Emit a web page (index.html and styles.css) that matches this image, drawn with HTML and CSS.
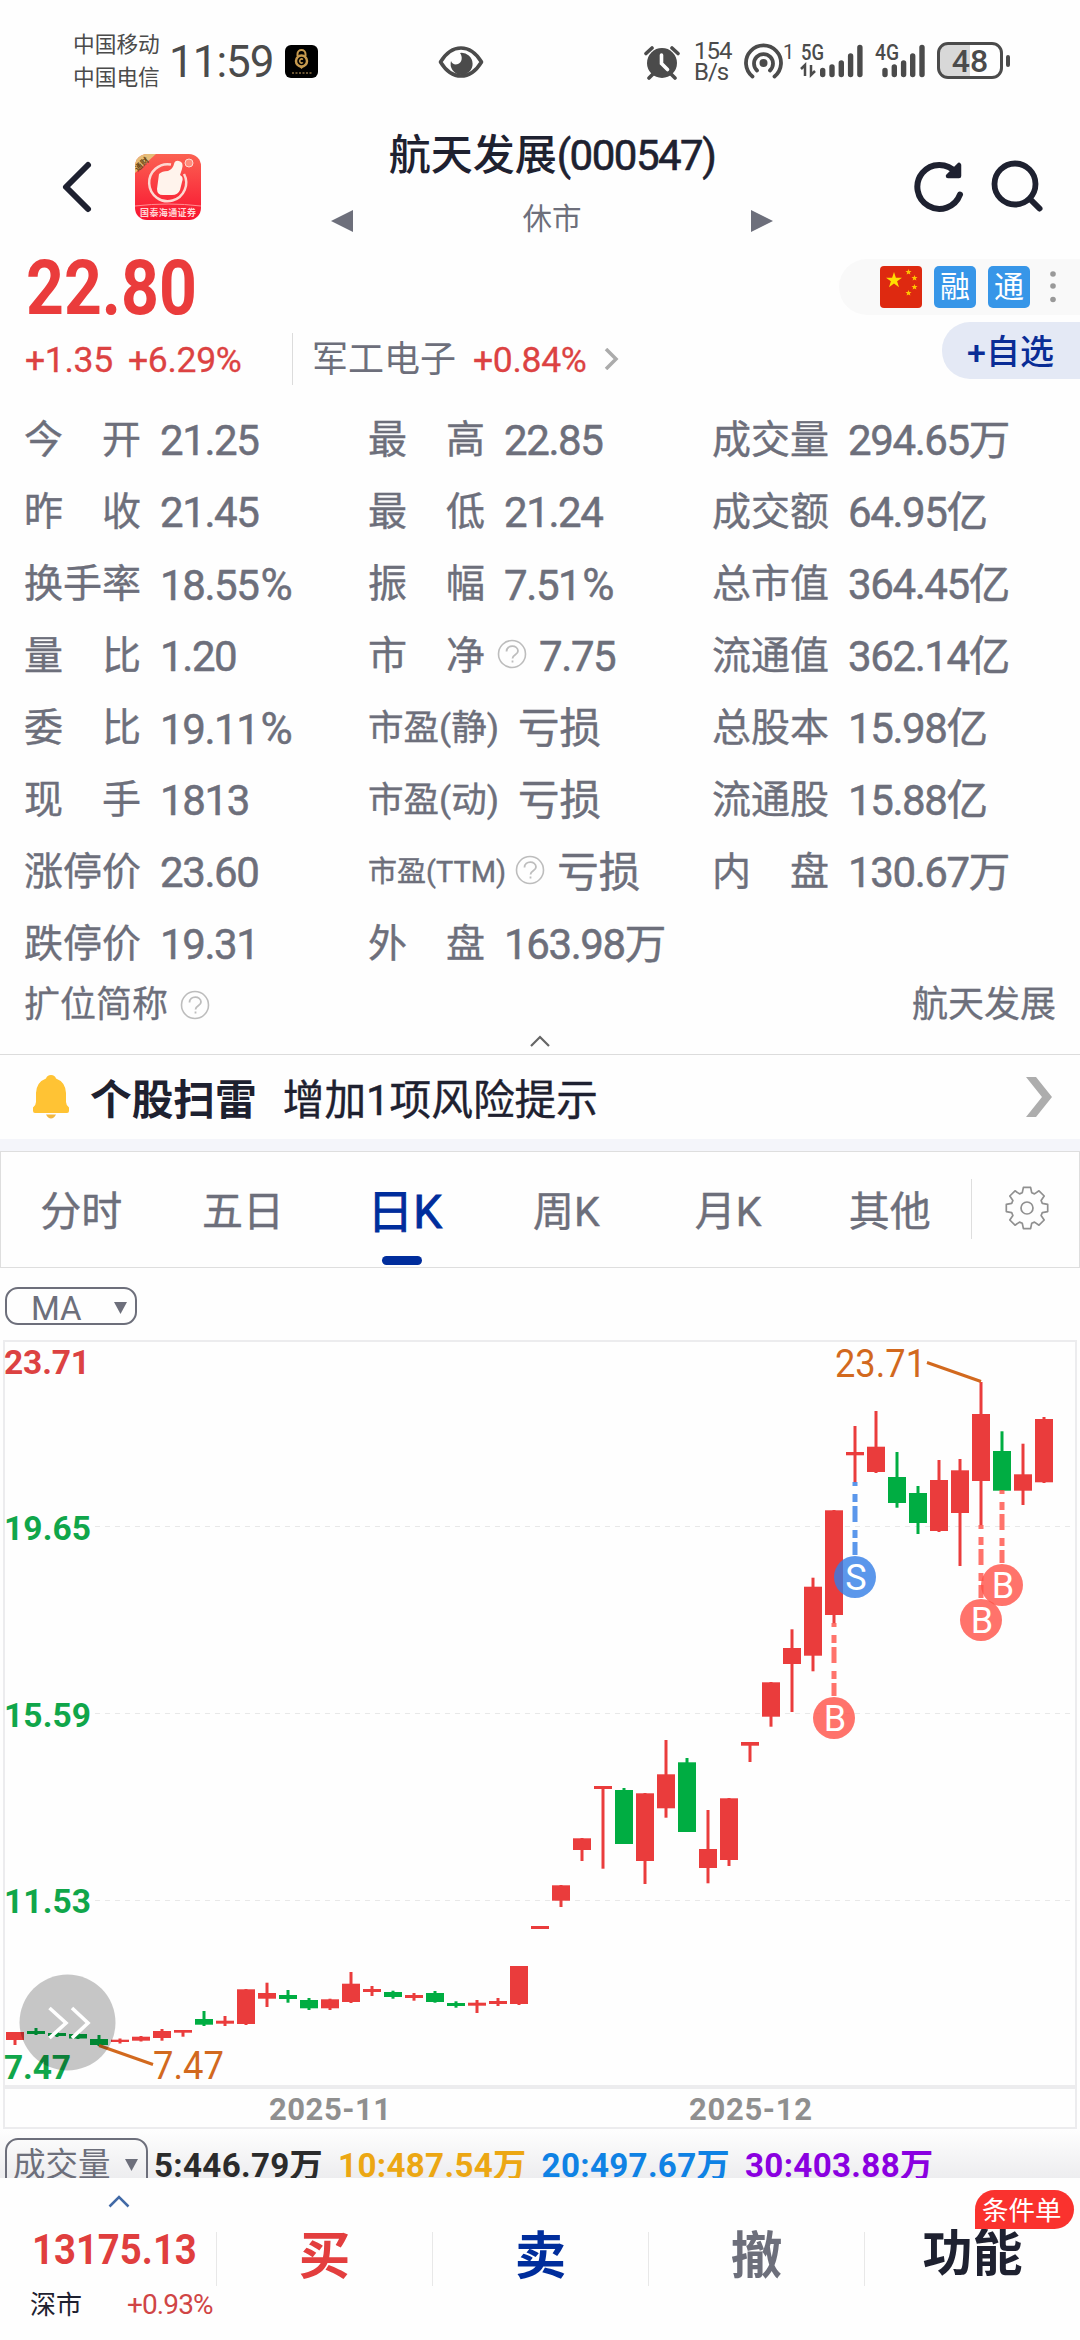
FILE: index.html
```html
<!DOCTYPE html>
<html lang="zh-CN">
<head>
    <meta charset="UTF-8">
    <title>航天发展(000547)</title>
    <link rel="stylesheet" href="styles.css">
</head>
<body>
    <div class="status-bar">
        <div class="carriers">
            <span>中国移动</span>
            <span>中国电信</span>
        </div>
        <span class="clock">11:59</span>
        <svg class="lock-app" width="33" height="33" viewBox="0 0 33 33">
            <rect width="33" height="33" rx="6" fill="#000"/>
            <path d="M12.500 11V9a4 4 0 0 1 8 0v2" fill="none" stroke="#c79a4e" stroke-width="2"/>
            <circle cx="16.500" cy="16" r="5.500" fill="none" stroke="#c79a4e" stroke-width="2.500"/>
            <path d="M18 14.500a2 2 0 1 0 0 3" fill="none" stroke="#c79a4e" stroke-width="1.500"/>
            <path d="M14.500 22h4l-2 2z" fill="#c79a4e"/>
            <path d="M7 28h20" stroke="#8d7245" stroke-width="1.500" stroke-dasharray="2 1.500"/>
        </svg>
        <svg class="eye" width="46" height="34" viewBox="0 0 46 34">
            <path d="M2.500 17C8 8 14.500 3 23 3s15 5 20.500 14C38 26 31.500 31 23 31S8 26 2.500 17z" fill="none" stroke="#4b4b4b" stroke-width="3.600" stroke-linejoin="round"/>
            <path d="M22 8a11 11 0 1 1-9 8c1 3 4 4 7 3 4-1.500 5-7 2-11z" fill="#4b4b4b"/>
        </svg>
        <svg class="alarm" width="36" height="36" viewBox="0 0 36 36">
            <circle cx="18" cy="19" r="15" fill="#4b4b4b"/>
            <path d="M2 9.500l6-5.500M34 9.500L28 4M5 34l4-4M31 34l-4-4" stroke="#4b4b4b" stroke-width="3.600" stroke-linecap="round"/>
            <path d="M17.500 11v8.500l6 6" fill="none" stroke="#fefefe" stroke-width="3.600" stroke-linecap="round"/>
        </svg>
        <div class="speed">
            <span>154</span>
            <span>B/s</span>
        </div>
        <svg class="hotspot" width="52" height="40" viewBox="0 0 52 40">
            <circle cx="20.500" cy="22" r="4" fill="#4b4b4b"/>
            <path d="M14 29.500a9.500 9.500 0 1 1 13 0M9.500 35.500a17.500 17.500 0 1 1 22 0" fill="none" stroke="#4b4b4b" stroke-width="3.800" stroke-linecap="round"/>
            <text x="40" y="18" class="tiny-num">1</text>
        </svg>
        <svg class="signal" width="64" height="38" viewBox="0 0 64 38">
            <text x="1" y="19" class="net" textLength="23" lengthAdjust="spacingAndGlyphs">5G</text>
            <path d="M1 28l4-4v11M11 24v10l4-4" fill="none" stroke="#4b4b4b" stroke-width="2.500"/>
            <path d="M22.700 29.500v4M32 26v7.500M41.300 22v11.500M50.600 15v18.500M59.900 6.500v27" stroke="#4b4b4b" stroke-width="5.400" stroke-linecap="round"/>
        </svg>
        <svg class="signal second" width="54" height="38" viewBox="0 0 54 38">
            <text x="1" y="19" class="net" textLength="24" lengthAdjust="spacingAndGlyphs">4G</text>
            <path d="M11 29.500v4M20.300 26v7.500M29.600 22v11.500M38.700 15v18.500M48 6.500v27" stroke="#4b4b4b" stroke-width="5.400" stroke-linecap="round"/>
        </svg>
        <div class="battery">48</div>
        <div class="battery-tip"></div>
    </div>

    <header class="header">
        <svg class="back" width="34" height="56" viewBox="0 0 34 56">
            <path d="M28 6L6 28l22 22" fill="none" stroke="#1e2130" stroke-width="6" stroke-linecap="round" stroke-linejoin="round"/>
        </svg>
        <svg class="broker-logo" width="66" height="66" viewBox="0 0 66 66">
            <defs>
                <linearGradient id="logoRed" x1="0" y1="0" x2="0" y2="1">
                    <stop offset="0" stop-color="#fb6152"/>
                    <stop offset="1" stop-color="#f91430"/>
                </linearGradient>
                <clipPath id="logoClip"><rect width="66" height="66" rx="12"/></clipPath>
            </defs>
            <g clip-path="url(#logoClip)">
                <rect width="66" height="66" fill="url(#logoRed)"/>
                <path d="M0 0h21L0 19z" fill="#e6bd78"/>
                <text x="-2" y="14" class="logo-tag" transform="rotate(-42 5 10)">通财</text>
                <path d="M36 10.500A18.500 18.500 0 1 0 49 20" fill="none" stroke="#fdd9d2" stroke-width="2.500"/>
                <path d="M24 20q3-3 9-3 5-2 6-7 1-4 5-3 5 1 3 8l-2 6q4 2 2 7l-2 8q-2 5-8 5H28q-6 0-6-6z" fill="#fff3ec"/>
                <circle cx="54" cy="9" r="4" fill="#ff8c7c" stroke="#fdd9d2"/>
                <path d="M0 52q33-4 66 0" fill="none" stroke="#ff8f92" stroke-width="1"/>
                <text x="5" y="62" class="logo-name" textLength="56">国泰海通证券</text>
            </g>
        </svg>
        <div class="title-block">
            <h1>航天发展<span class="code">(000547)</span></h1>
            <div class="switcher">
                <svg width="22" height="22" viewBox="0 0 22 22"><path d="M22 0v22L0 11z" fill="#6d6f7b"/></svg>
                <span>休市</span>
                <svg width="22" height="22" viewBox="0 0 22 22"><path d="M0 0v22l22-11z" fill="#6d6f7b"/></svg>
            </div>
        </div>
        <svg class="refresh" width="54" height="54" viewBox="0 0 54 54">
            <path d="M48 34.500a22 22 0 1 1-4-22" fill="none" stroke="#1e2130" stroke-width="6" stroke-linecap="round"/>
            <path d="M47 5v11H36z" fill="#1e2130" stroke="#1e2130" stroke-width="4.500" stroke-linejoin="round" stroke-linecap="round"/>
        </svg>
        <svg class="search" width="54" height="54" viewBox="0 0 54 54">
            <circle cx="24" cy="24" r="20.500" fill="none" stroke="#1e2130" stroke-width="5.800"/>
            <path d="M39 39l9.500 9.500" stroke="#1e2130" stroke-width="6" stroke-linecap="round"/>
        </svg>
    </header>

    <section class="quote">
        <div class="quote-left">
            <div class="price">22.80</div>
            <div class="changes">
                <span class="change">+1.35</span>
                <span class="change pct">+6.29%</span>
                <span class="sector">军工电子</span>
                <span class="change sector-pct">+0.84%</span>
                <svg width="15" height="22" viewBox="0 0 15 22"><path d="M2 1l10 10L2 21" fill="none" stroke="#ababab" stroke-width="3.500"/></svg>
            </div>
        </div>
        <div class="quote-right">
            <div class="tags">
                <svg width="42" height="42" viewBox="0 0 42 42">
                    <rect width="42" height="42" rx="4" fill="#de2910"/>
                    <path d="M14 6l1.900 5.700H22l-4.900 3.600 1.900 5.900-5-3.600-5 3.600 1.900-5.900L6 11.700h6.100z" fill="#ffde00"/>
                    <g fill="#ffc500">
                        <path id="star" d="M28.500 3l.8 2 2.200.1-1.700 1.400.6 2.100-1.900-1.200-1.900 1.200.6-2.100-1.700-1.400 2.200-.1z"/>
                        <use href="#star" x="6" y="6"/>
                        <use href="#star" x="6" y="15"/>
                        <use href="#star" y="21"/>
                    </g>
                </svg>
                <span class="tag">融</span>
                <span class="tag">通</span>
                <svg class="dots" width="8" height="36" viewBox="0 0 8 36">
                    <g fill="#999"><circle cx="4" cy="5" r="2.800"/><circle cx="4" cy="17" r="2.800"/><circle cx="4" cy="30.500" r="2.800"/></g>
                </svg>
            </div>
            <div class="watch">+自选</div>
        </div>
    </section>

    <section class="stats">
        <div class="stat"><label>今　开</label><b>21.25</b></div>
        <div class="stat"><label>最　高</label><b>22.85</b></div>
        <div class="stat"><label>成交量</label><b>294.65<i>万</i></b></div>

        <div class="stat"><label>昨　收</label><b>21.45</b></div>
        <div class="stat"><label>最　低</label><b>21.24</b></div>
        <div class="stat"><label>成交额</label><b>64.95<i>亿</i></b></div>

        <div class="stat"><label>换手率</label><b>18.55<u>%</u></b></div>
        <div class="stat"><label>振　幅</label><b>7.51<u>%</u></b></div>
        <div class="stat"><label>总市值</label><b>364.45<i>亿</i></b></div>

        <div class="stat"><label>量　比</label><b>1.20</b></div>
        <div class="stat">
            <label>市　净</label>
            <svg class="help" width="30" height="30" viewBox="0 0 30 30"><use href="#help"/></svg>
            <b>7.75</b>
        </div>
        <div class="stat"><label>流通值</label><b>362.14<i>亿</i></b></div>

        <div class="stat"><label>委　比</label><b>19.11<u>%</u></b></div>
        <div class="stat"><label class="mid">市盈(静)</label><b><i>亏损</i></b></div>
        <div class="stat"><label>总股本</label><b>15.98<i>亿</i></b></div>

        <div class="stat"><label>现　手</label><b>1813</b></div>
        <div class="stat"><label class="mid">市盈(动)</label><b><i>亏损</i></b></div>
        <div class="stat"><label>流通股</label><b>15.88<i>亿</i></b></div>

        <div class="stat"><label>涨停价</label><b>23.60</b></div>
        <div class="stat">
            <label class="small">市盈(TTM)</label>
            <svg class="help" width="30" height="30" viewBox="0 0 30 30"><use href="#help"/></svg>
            <b><i>亏损</i></b>
        </div>
        <div class="stat"><label>内　盘</label><b>130.67<i>万</i></b></div>

        <div class="stat"><label>跌停价</label><b>19.31</b></div>
        <div class="stat"><label>外　盘</label><b>163.98<i>万</i></b></div>
    </section>

    <div class="short-name">
        <span>扩位简称</span>
        <svg width="30" height="30" viewBox="0 0 30 30">
            <g id="help" fill="none" stroke="#bdbdbd">
                <circle cx="15" cy="15" r="13.500" stroke-width="1.600"/>
                <path d="M9.500 12.500c0-7 11.500-7 11.500-.5 0 4-5.500 3.500-5.500 7.500" stroke-width="1.800"/>
                <path d="M15.500 21.500v2" stroke-width="1.800"/>
            </g>
        </svg>
        <span class="full">航天发展</span>
    </div>
    <div class="collapse">
        <svg width="20" height="13" viewBox="0 0 20 13"><path d="M1 12l9-9 9 9" fill="none" stroke="#666" stroke-width="2.200"/></svg>
    </div>

    <div class="risk">
        <svg width="38" height="46" viewBox="0 0 38 46">
            <path d="M19 1q4 0 5 3.500Q33.500 8 34 19v9q0 3 3 5.500V37q0 2-2 2H3q-2 0-2-2v-3.500Q4 31 4 28v-9Q4.500 8 14 4.500 15 1 19 1z" fill="#ffc334"/>
            <path d="M14 40.500h10q-2 4-5 4t-5-4z" fill="#f3b840"/>
        </svg>
        <strong>个股扫雷</strong>
        <span>增加1项风险提示</span>
        <svg class="more" width="30" height="42" viewBox="0 0 30 42"><path d="M1 1h10l16 20-16 20H1l16-20z" fill="#adadad"/></svg>
    </div>

    <nav class="tabs">
        <a>分时</a>
        <a>五日</a>
        <a class="active">日K</a>
        <a>周K</a>
        <a>月K</a>
        <a>其他</a>
        <div class="settings">
            <svg width="46" height="46" viewBox="-23 -23 46 46">
                <g fill="none" stroke="#909090" stroke-width="1.700" stroke-linejoin="round">
                    <path id="gear"/>
                    <circle r="6"/>
                </g>
            </svg>
        </div>
    </nav>

    <div class="ma-row">
        <div class="select ma"><span>MA</span><svg width="13" height="12" viewBox="0 0 13 12"><path d="M0 0h13L6.500 12z" fill="#6d6f7b"/></svg></div>
    </div>

    <svg id="kline" class="kline" width="1080" height="800" viewBox="0 1330 1080 800">
        <g fill="none" stroke="#ececee" stroke-width="2">
            <rect x="4" y="1341" width="1072" height="745"/>
            <rect x="4" y="2088" width="1072" height="40"/>
        </g>
        <g stroke="#e8e8e8" stroke-width="1.200" stroke-dasharray="5 5">
            <path d="M95 1526.500H1072M95 1713.500H1072M95 1900.500H1072"/>
        </g>
        <g id="candles"></g>
        <g class="axis down">
            <text x="4" y="1374" class="up" textLength="86">23.71</text>
            <text x="4" y="1540" textLength="87">19.65</text>
            <text x="4" y="1727" textLength="87">15.59</text>
            <text x="4" y="1913" textLength="87">11.53</text>
            <text x="4" y="2079" textLength="67">7.47</text>
        </g>
        <g class="axis dates">
            <text x="269" y="2120" textLength="122">2025-11</text>
            <text x="689" y="2120" textLength="123">2025-12</text>
        </g>
        <g class="extreme">
            <path d="M927 1362.500l54 19M99 2045.500l54 19"/>
            <text x="835" y="1377" textLength="91" lengthAdjust="spacingAndGlyphs">23.71</text>
            <text x="153" y="2079" textLength="71" lengthAdjust="spacingAndGlyphs">7.47</text>
        </g>
        <g id="trades"></g>
        <circle cx="67.500" cy="2022.500" r="48" fill="#000" fill-opacity=".22"/>
        <path d="M49.500 2008l16.500 15-16.500 15M72 2008l16 15-16 15" fill="none" stroke="#fff" stroke-width="3.600"/>
    </svg>

    <div class="volume-row">
        <div class="select vol"><span>成交量</span><svg width="13" height="12" viewBox="0 0 13 12"><path d="M0 0h13L6.500 12z" fill="#6d6f7b"/></svg></div>
        <span class="vol-ma ma5">5:446.79万</span>
        <span class="vol-ma ma10">10:487.54万</span>
        <span class="vol-ma ma20">20:497.67万</span>
        <span class="vol-ma ma30">30:403.88万</span>
    </div>

    <footer class="trade-bar">
        <div class="index">
            <svg width="22" height="14" viewBox="0 0 22 14"><path d="M1.500 12.500L11 3l9.500 9.500" fill="none" stroke="#426aa6" stroke-width="2.500"/></svg>
            <div class="index-value">13175.13</div>
            <div class="index-row"><span>深市</span><span class="index-pct">+0.93%</span></div>
        </div>
        <div class="action buy">买</div>
        <div class="action sell">卖</div>
        <div class="action cancel">撤</div>
        <div class="action more-fn">功能<span class="badge">条件单</span></div>
    </footer>

    <script src="chart.js"></script>
</body>
</html>
```
FILE: styles.css
```css
* {
    box-sizing: border-box;
}
body {
    margin: 0;
    width: 1080px;
    height: 2340px;
    overflow: hidden;
    background-color: #fefefe;
    color: #6d6f7b;
    font-family: Roboto, "Noto Sans CJK SC", sans-serif;
}
svg {
    display: block;
    flex: none;
}

/* status bar */
.status-bar {
    display: flex;
    align-items: flex-start;
    height: 122px;
    padding: 28px 0 0 73px;
    color: #4b4b4b;
}
.carriers {
    display: flex;
    flex-direction: column;
    width: 88px;
    font-size: 21.7px;
    line-height: 33px;
}
.clock {
    width: 114px;
    margin-left: 8px;
    font-size: 44px;
    line-height: 69px;
    letter-spacing: -1px;
}
.lock-app {
    margin-top: 17px;
    margin-left: 2px;
}
.eye {
    margin: 17px 0 0 120px;
}
.alarm {
    margin: 16px 0 0 160px;
}
.speed {
    display: flex;
    flex-direction: column;
    width: 40px;
    margin: 13px 0 0 14px;
    font-size: 24px;
    line-height: 21px;
    letter-spacing: -1px;
}
.hotspot {
    margin: 13px 0 0 9px;
}
.tiny-num {
    font-size: 20px;
    fill: #4b4b4b;
}
.net {
    font-size: 22px;
    font-weight: 500;
    fill: #4b4b4b;
}
.signal {
    margin: 13px 0 0 5px;
}
.signal.second {
    margin-left: 10px;
}
.battery {
    width: 66px;
    height: 37px;
    margin: 14px 0 0 9px;
    border: 3px solid #4b4b4b;
    border-radius: 11px;
    background: linear-gradient(90deg, #d8d8d8 50%, #fefefe 50%);
    font-size: 32px;
    font-weight: 500;
    line-height: 32px;
    text-align: center;
}
.battery-tip {
    width: 4px;
    height: 12px;
    margin: 27px 0 0 3px;
    border-radius: 2px;
    background-color: #4b4b4b;
}

/* header */
.header {
    display: flex;
    align-items: flex-start;
    height: 130px;
    padding-left: 60px;
}
.back {
    margin-top: 37px;
}
.broker-logo {
    margin: 32px 0 0 41px;
}
.logo-tag {
    font-size: 8px;
    font-weight: 700;
    fill: #6b4715;
}
.logo-name {
    font-size: 9px;
    font-weight: 700;
    fill: #ffd6d6;
}
.title-block {
    width: 442px;
    margin-left: 130px;
}
.title-block h1 {
    margin: 0;
    height: 68px;
    color: #1e2130;
    font-size: 42px;
    font-weight: 500;
    line-height: 67px;
    text-align: center;
}
.code {
    font-weight: 400;
    letter-spacing: -1.5px;
    -webkit-text-stroke: .6px #1e2130;
}
.switcher {
    display: flex;
    align-items: center;
    justify-content: space-between;
    height: 58px;
    font-size: 29.5px;
    line-height: 58px;
}
.switcher svg {
    margin-top: 4px;
}
.refresh {
    margin: 38px 0 0 139px;
}
.search {
    margin: 38px 0 0 25px;
}

/* price */
.quote {
    display: flex;
    justify-content: space-between;
    height: 152px;
}
.price {
    height: 71px;
    padding-left: 26px;
    color: #ea3c3c;
    font-size: 76px;
    font-weight: 700;
    line-height: 73px;
    transform: scaleX(.87);
    transform-origin: 26px 0;
}
.changes {
    display: flex;
    align-items: center;
    height: 58px;
    padding: 5px 0 0 25px;
    margin-top: 4px;
}
.change {
    width: 103px;
    padding-top: 2px;
    color: #dc4242;
    font-size: 35.5px;
    letter-spacing: -.3px;
    -webkit-text-stroke: .3px #dc4242;
}
.change.pct {
    width: 164px;
}
.sector {
    height: 52px;
    width: 163px;
    padding: 1px 0 0 19px;
    border-left: 1px solid #dcdcdc;
    font-size: 36px;
    line-height: 52px;
    white-space: nowrap;
}
.change.sector-pct {
    width: 131px;
    margin-left: 18px;
}
.quote-right {
    display: flex;
    flex-direction: column;
    align-items: flex-end;
    padding-top: 7px;
}
.tags {
    display: flex;
    align-items: center;
    gap: 12px;
    width: 241px;
    height: 56px;
    padding-left: 41px;
    border-radius: 28px 0 0 28px;
    background-color: #f9f9f9;
}
.tag {
    width: 42px;
    height: 42px;
    border-radius: 5px;
    background-color: #3796e8;
    color: #fff;
    font-size: 30px;
    line-height: 42px;
    text-align: center;
}
.dots {
    margin-left: 7px;
}
.watch {
    width: 138px;
    height: 57px;
    margin-top: 7px;
    padding-left: 25px;
    border-radius: 28px 0 0 28px;
    background-color: #e4e9f5;
    color: #0a2d96;
    font-size: 34px;
    font-weight: 500;
    line-height: 60px;
}

/* stats grid */
.stats {
    display: grid;
    grid-template-columns: 344px 344px 1fr;
    grid-auto-rows: 72px;
    padding-left: 24px;
}
.stat {
    display: flex;
    align-items: center;
}
.stat label {
    font-size: 39px;
    line-height: 72px;
    white-space: nowrap;
    -webkit-text-stroke: .4px #6d6f7b;
}
.stat label.mid {
    font-size: 35.5px;
}
.stat label.small {
    font-size: 29px;
}
.stat b {
    margin-left: 19px;
    padding-top: 2px;
    font-size: 42px;
    font-weight: 400;
    letter-spacing: -1.4px;
    line-height: 70px;
    white-space: nowrap;
    -webkit-text-stroke: .5px #6d6f7b;
}
.stat i {
    font-style: normal;
    font-size: 41.5px;
    letter-spacing: 0;
}
.stat u {
    margin-left: 2px;
    font-size: 44px;
    text-decoration: none;
}
.help {
    margin: -4px -7px 0 12px;
}
.small + .help {
    margin-left: 9px;
}

.short-name {
    display: flex;
    align-items: center;
    height: 48px;
    padding: 1px 24px 0;
    font-size: 36px;
    line-height: 48px;
    -webkit-text-stroke: .3px #6d6f7b;
}
.short-name svg {
    margin-left: 12px;
}
.full {
    margin-left: auto;
}
.collapse {
    display: flex;
    justify-content: center;
    height: 27px;
    padding-top: 6px;
    border-bottom: 1px solid #dcdcdc;
}

/* risk notice */
.risk {
    display: flex;
    align-items: center;
    height: 96px;
    padding: 0 25px 0 32px;
    border-bottom: 12px solid #f4f5fa;
    color: #1e2130;
    font-size: 41.7px;
}
.risk strong {
    margin: 0 26px 0 20px;
}
.risk span {
    -webkit-text-stroke: .4px #1e2130;
}
.risk .more {
    margin-left: auto;
}

/* period tabs */
.tabs {
    display: flex;
    height: 117px;
    border: 1px solid #dedede;
}
.tabs a {
    width: 161.7px;
    padding-right: 1px;
    font-size: 41px;
    line-height: 120px;
    text-align: center;
    -webkit-text-stroke: .4px #6d6f7b;
}
.tabs a.active {
    display: flex;
    flex-direction: column;
    align-items: center;
    color: #002d9c;
    font-size: 46px;
    -webkit-text-stroke: .9px #002d9c;
}
.tabs a.active::after {
    content: "";
    width: 40px;
    height: 9px;
    margin: -16px 5px 0 0;
    border-radius: 5px;
    background-color: #002d9c;
}
.settings {
    flex: 1;
    display: flex;
    justify-content: center;
    height: 60px;
    margin-top: 27px;
    padding: 6px 0 0 2px;
    border-left: 1px solid #dedede;
}

/* chart */
.ma-row {
    height: 62px;
    padding: 19px 0 0 5px;
}
.select {
    display: flex;
    align-items: center;
    justify-content: space-between;
    border: 2px solid #6d6f7b;
    border-radius: 13px;
}
.select.ma {
    width: 132px;
    height: 38px;
    padding: 6px 8px 0 24px;
    font-size: 33px;
    line-height: 32px;
}
.ma svg {
    margin-bottom: 2px;
}
.kline text {
    font-family: Roboto, sans-serif;
}
.axis text {
    font-size: 33.5px;
    font-weight: 700;
}
.axis.down text {
    fill: #10a64a;
}
.axis text.up {
    fill: #dc4242;
}
.axis.dates text {
    font-size: 31px;
    fill: #8f8f8f;
}
.extreme path {
    stroke: #d2691e;
    stroke-width: 3;
}
.extreme text {
    font-size: 38px;
    fill: #d2691e;
}
.trade-mark text {
    font-size: 36px;
    fill: #fff;
    text-anchor: middle;
}

/* volume */
.volume-row {
    display: flex;
    height: 48px;
    padding: 8px 0 0 5px;
    overflow: hidden;
    background: linear-gradient(#fefefe, #ededef);
}
.select.vol {
    width: 143px;
    height: 60px;
    padding: 0 8px 6px 6px;
    margin-right: 6px;
    font-size: 32.5px;
    line-height: 46px;
}
.vol-ma {
    margin-right: 15px;
    font-size: 33.2px;
    font-weight: 700;
    line-height: 55px;
    letter-spacing: .3px;
    white-space: nowrap;
}
.ma5 {
    color: #2b2b2b;
}
.ma10 {
    color: #eca713;
}
.ma20 {
    color: #0f82e4;
}
.ma30 {
    color: #8a00e0;
}

/* bottom bar */
.trade-bar {
    display: grid;
    grid-template-columns: repeat(5, 216px);
    height: 162px;
    background-color: #fefefe;
}
.index {
    display: flex;
    flex-direction: column;
    padding-top: 16px;
}
.index svg {
    margin-left: 108px;
}
.index-value {
    padding-left: 32px;
    margin-top: 13px;
    color: #e03e3e;
    font-size: 43px;
    font-weight: 700;
    line-height: 57px;
    transform: scaleX(.89);
    transform-origin: 32px 0;
}
.index-row {
    display: flex;
    align-items: center;
    padding-left: 30px;
    color: #1e2130;
    font-size: 26px;
    line-height: 52px;
}
.index-pct {
    margin-left: 45px;
    padding-top: 1px;
    color: #d04545;
    font-size: 28px;
    letter-spacing: -.9px;
}
.action {
    position: relative;
    height: 54px;
    margin-top: 54px;
    border-left: 1px solid #e8e8e8;
    font-size: 51.5px;
    font-weight: 700;
    line-height: 50px;
    text-align: center;
}
.buy {
    color: #e33e3e;
}
.sell {
    color: #002d9c;
}
.cancel {
    color: #6d6f7b;
}
.more-fn {
    color: #1e2130;
    font-size: 50px;
    line-height: 45px;
}
.badge {
    position: absolute;
    top: -42px;
    right: 6px;
    width: 99px;
    height: 39px;
    padding-left: 7px;
    border-radius: 20px 20px 20px 0;
    background-color: #fa322e;
    color: #fff;
    font-size: 26.5px;
    font-weight: 400;
    line-height: 41px;
    text-align: left;
}
```
FILE: chart.js
```js
const SVG_NS = 'http://www.w3.org/2000/svg';
const RED = '#ea3c3c';
const GREEN = '#00ad42';

// [direction, high, body top, body bottom, low]
const candles = [
    ['r', 2032, 2032, 2040, 2045], ['g', 2028, 2031, 2034, 2035], ['g', 2032, 2033, 2036, 2037],
    ['g', 2033, 2034, 2038.5, 2039], ['g', 2035, 2039, 2045, 2046], ['r', 2038.5, 2039.7, 2042, 2043.5],
    ['r', 2036, 2036.7, 2040.7, 2041.5], ['r', 2029, 2031, 2038, 2040.7], ['r', 2030, 2030, 2032.7, 2036.7],
    ['g', 2011, 2019, 2024.7, 2026], ['r', 2016, 2020.7, 2023.7, 2026], ['r', 1989, 1989.3, 2024, 2025],
    ['r', 1982.7, 1993, 1998.7, 2007], ['g', 1990, 1995, 1999, 2002.7], ['g', 1998, 2000, 2008.3, 2010],
    ['r', 1998.7, 1999.3, 2008.3, 2010], ['r', 1972, 1983.7, 2002, 2003], ['r', 1986, 1989, 1992, 1996],
    ['g', 1990.7, 1992, 1997, 1998.7], ['r', 1993, 1995, 1998, 2000.7], ['g', 1991, 1993, 2002, 2002.7],
    ['g', 2001.3, 2003, 2006, 2007.7], ['r', 2000, 2002.7, 2005.7, 2013], ['r', 1998, 2001, 2004, 2006],
    ['r', 1966, 1966, 2004, 2005], ['r', 1926, 1926, 1929, 1929], ['r', 1885, 1885.3, 1900.7, 1907],
    ['r', 1838, 1838.3, 1850, 1861], ['r', 1786, 1786, 1789, 1868.7], ['g', 1788, 1790, 1844, 1844],
    ['r', 1793, 1793.3, 1861, 1884], ['r', 1740, 1774.3, 1808.3, 1817.7], ['g', 1758, 1762.3, 1832, 1832],
    ['r', 1810, 1849, 1868, 1883.3], ['r', 1798, 1798.3, 1860, 1866], ['r', 1742, 1742, 1745.7, 1762],
    ['r', 1682, 1682.3, 1716.7, 1726.7], ['r', 1629.3, 1648, 1664, 1712], ['r', 1577.7, 1586.7, 1655.7, 1671.3],
    ['r', 1510, 1510.3, 1615, 1623.3], ['r', 1426, 1452, 1455.3, 1482.3], ['r', 1411, 1446.7, 1472, 1473],
    ['g', 1452, 1477, 1503, 1507.7], ['g', 1486, 1493, 1523, 1534], ['r', 1460, 1480, 1531, 1532],
    ['r', 1459, 1470.3, 1513, 1566], ['r', 1382, 1414, 1481, 1525.3], ['g', 1431.3, 1451, 1490.7, 1490.7],
    ['r', 1443.7, 1474.3, 1490.7, 1505], ['r', 1417, 1419, 1482.3, 1483]
];

const trades = [
    { type: 'B', x: 834, from: 1623, y: 1718 },
    { type: 'S', x: 855, from: 1482, y: 1577 },
    { type: 'B', x: 981, from: 1525, y: 1620 },
    { type: 'B', x: 1002, from: 1490, y: 1585 }
];

function add(parent, name, attrs) {
    const el = document.createElementNS(SVG_NS, name);
    for (const key in attrs) {
        el.setAttribute(key, attrs[key]);
    }
    parent.appendChild(el);
    return el;
}

const candleGroup = document.getElementById('candles');
candles.forEach(([dir, high, top, bottom, low], i) => {
    const x = 15 + i * 21;
    const fill = dir === 'r' ? RED : GREEN;
    add(candleGroup, 'rect', { x: x - 1.5, y: high, width: 3, height: low - high, fill: fill });
    add(candleGroup, 'rect', { x: x - 9, y: top, width: 18, height: bottom - top, fill: fill });
});

const tradeGroup = document.getElementById('trades');
trades.forEach(t => {
    const color = t.type === 'B' ? '#ff5046' : '#327de6';
    const g = add(tradeGroup, 'g', { class: 'trade-mark' });
    add(g, 'path', {
        d: `M${t.x} ${t.from}V${t.y - 22}`,
        stroke: color, 'stroke-opacity': .8, 'stroke-width': 5,
        'stroke-dasharray': '16 8 8 4', 'stroke-dashoffset': 12
    });
    add(g, 'circle', { cx: t.x, cy: t.y, r: 21, fill: color, 'fill-opacity': .8 });
    add(g, 'text', { x: t.x + 1, y: t.y + 13 }).textContent = t.type;
});

// settings gear: eight teeth around the hub
const points = [];
for (let i = 0; i < 8; i++) {
    [[-17, 16], [-10, 21], [10, 21], [17, 16]].forEach(([deg, r]) => {
        const a = (i * 45 + deg) * Math.PI / 180;
        points.push((Math.sin(a) * r).toFixed(1) + ' ' + (-Math.cos(a) * r).toFixed(1));
    });
}
document.getElementById('gear').setAttribute('d', 'M' + points.join('L') + 'Z');
```
